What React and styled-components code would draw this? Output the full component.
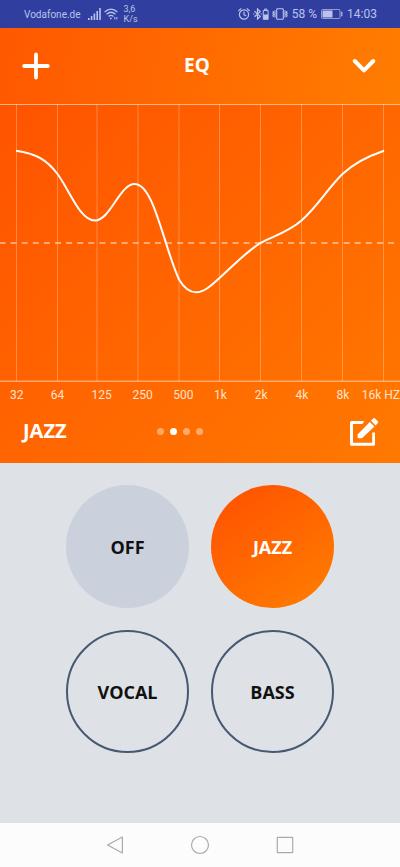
import React, { useState } from "react";
import styled, { createGlobalStyle, css } from "styled-components";

const GlobalStyle = createGlobalStyle`
  * { box-sizing: border-box; }
  html, body, #root { height: 100%; }
  body { margin: 0; font-family: "Open Sans", "Noto Sans", sans-serif; }
  button { font: inherit; }
`;

const Screen = styled.div`
  display: flex;
  flex-direction: column;
  min-height: 100%;
  overflow: hidden;
  background: #dee1e6;
`;

const StatusBar = styled.div`
  display: flex;
  align-items: center;
  justify-content: space-between;
  height: 28px;
  padding: 0 23px 0 24px;
  background: #303f9f;
  color: #bcc2ea;
  font-family: Roboto, sans-serif;
`;

const StatusGroup = styled.div`
  display: flex;
  align-items: center;
  gap: ${(p) => p.$gap}px;
  svg { display: block; }
`;

const Carrier = styled.span`
  font-size: 10px;
  margin-right: 4px;
`;

const Speed = styled.span`
  font-size: 9px;
  line-height: 10px;
  margin-left: 3px;
`;

const StatusText = styled.span`
  font-size: 12px;
  line-height: 16px;
  white-space: nowrap;
`;

const Header = styled.header`
  display: grid;
  grid-template-columns: 1fr auto 1fr;
  align-items: center;
  height: 76px;
  padding: 0 20px;
  background: linear-gradient(100deg, #ff5800, #ff7d00);
  color: #fff;
`;

const Title = styled.h1`
  margin: 0;
  padding: 0 6px 2px 0;
  font-size: 19px;
  line-height: 26px;
  font-weight: 700;
`;

const IconButton = styled.button`
  display: grid;
  place-items: center;
  width: 32px;
  height: 32px;
  padding: 0;
  border: 0;
  background: none;
  color: inherit;
  cursor: pointer;
  justify-self: ${(p) => p.$side || "center"};
`;

const EqPanel = styled.section`
  background: linear-gradient(135deg, #ff5300, #ff7900);
  color: #fff;
`;

const Chart = styled.svg`
  display: block;
  width: 100%;
  height: auto;
`;

const AxisLabels = styled.div`
  display: grid;
  grid-template-columns: repeat(10, minmax(0, 1fr));
  margin: 0 -4px;
  font-family: Roboto, sans-serif;
  font-size: 12px;
  line-height: 26px;
  color: #ffe3d0;
`;

const AxisLabel = styled.span`
  display: flex;
  padding-left: 14px;
  white-space: nowrap;
  &:last-child {
    justify-content: flex-end;
    padding: 0 4px 0 0;
  }
`;

const PresetBar = styled.div`
  display: grid;
  grid-template-columns: 1fr auto 1fr;
  align-items: center;
  height: 55px;
  padding: 0 20px 9px 23px;
`;

const PresetName = styled.h2`
  margin: 0;
  font-size: 20px;
  line-height: 26px;
  font-weight: 700;
`;

const Dots = styled.div`
  display: flex;
  gap: 6px;
  padding-right: 43px;
`;

const Dot = styled.span`
  width: 7px;
  height: 7px;
  border-radius: 50%;
  background: ${(p) => (p.$active ? "#fff" : "rgba(255, 255, 255, 0.42)")};
`;

const PresetGrid = styled.main`
  flex: 1;
  display: grid;
  grid-template-columns: repeat(2, 123px);
  align-content: start;
  justify-content: center;
  gap: 22px;
  padding: 22px 0;
`;

const looks = {
  off: css`
    background: #cad1dc;
    color: #111;
  `,
  selected: css`
    background: linear-gradient(145deg, #ff5400 10%, #ff7a00 90%);
    color: #fff;
  `,
  outline: css`
    background: none;
    border: 2px solid #475872;
    color: #111;
  `,
};

const PresetButton = styled.button`
  aspect-ratio: 1;
  padding: 0;
  border: 0;
  border-radius: 50%;
  font-size: 18px;
  line-height: 24px;
  font-weight: 700;
  cursor: pointer;
  ${(p) => looks[p.$look]}
`;

const NavBar = styled.nav`
  display: flex;
  align-items: center;
  justify-content: center;
  gap: 53px;
  height: 44px;
  background: #fcfcfc;
  color: #aaa;
`;

const FREQUENCIES = ["32", "64", "125", "250", "500", "1k", "2k", "4k", "8k", "16k HZ"];
const GRID_LINES = [16.5, 57.5, 97, 138, 179, 219.5, 260.5, 301.5, 342.5, 383.5];
const PRESETS = ["OFF", "JAZZ", "VOCAL", "BASS"];

const SignalIcon = () => (
  <svg width="13" height="12" viewBox="0 0 13 12" fill="currentColor" aria-hidden="true">
    <path d="M0 10h1.6v2H0zM2.8 8h1.6v4H2.8zM5.6 5.5h1.6V12H5.6zM8.4 3H10v9H8.4zM11.2 0h1.6v12h-1.6z" />
  </svg>
);

const WifiIcon = () => (
  <svg width="14" height="12" viewBox="0 0 14 12" fill="none" stroke="currentColor" strokeWidth="1.3" aria-hidden="true">
    <path d="M.6 4Q7-1.8 13.4 4M2.6 6.3Q7 2.3 11.4 6.3M4.6 8.5Q7 6.3 9.4 8.5" />
    <circle cx="6.8" cy="10.4" r=".9" fill="currentColor" stroke="none" />
    <path d="M10.8 9v2.4M12.8 9v2.4" strokeWidth="1" />
  </svg>
);

const AlarmIcon = () => (
  <svg width="12" height="12" viewBox="0 0 12 12" fill="none" stroke="currentColor" strokeWidth="1.2" strokeLinecap="round" aria-hidden="true">
    <circle cx="6" cy="6.5" r="4.6" />
    <path d="M6 4v2.7l1.8 1M.7 2.6 2.9.8M11.3 2.6 9.1.8" />
  </svg>
);

const BluetoothIcon = () => (
  <svg width="16" height="12" viewBox="0 0 16 12" fill="none" stroke="currentColor" aria-hidden="true">
    <path d="M1.5 3.2 7.2 8.4 4.5 11V1l2.7 2.6-5.7 5.2" strokeWidth="1.2" />
    <path d="M0 6h1.3M7.5 6h1.3" strokeWidth="1.2" />
    <path d="M10.3 2.5h4.8v8.8h-4.8zM11.6 1h2.2v1.5h-2.2z" />
    <path d="M10.3 6.5h4.8v4.8h-4.8z" fill="currentColor" stroke="none" />
  </svg>
);

const VibrateIcon = () => (
  <svg width="16" height="12" viewBox="0 0 16 12" fill="none" stroke="currentColor" strokeWidth="1.1" aria-hidden="true">
    <rect x="4.7" y=".7" width="6.6" height="10.6" rx=".8" />
    <path d="M3 2.5v7M13 2.5v7M.8 3l.9 1.2-.9 1.2.9 1.2-.9 1.2.9 1.2M15.2 3l-.9 1.2.9 1.2-.9 1.2.9 1.2-.9 1.2" />
  </svg>
);

const BatteryIcon = () => (
  <svg width="22" height="10" viewBox="0 0 22 10" fill="none" stroke="currentColor" aria-hidden="true">
    <rect x=".5" y=".5" width="18.5" height="9" rx="1" strokeOpacity=".7" />
    <path d="M1.5 1.5h10v7h-10z" fill="currentColor" stroke="none" />
    <path d="M20.8 2.8v4.4" strokeWidth="1.2" />
  </svg>
);

const PlusIcon = () => (
  <svg width="28" height="28" viewBox="0 0 28 28" stroke="currentColor" strokeWidth="3.8" strokeLinecap="round" aria-hidden="true">
    <path d="M14 2.5v23M2.2 14h23.6" />
  </svg>
);

const ChevronIcon = () => (
  <svg width="24" height="16" viewBox="0 0 24 16" fill="none" stroke="currentColor" strokeWidth="4" strokeLinecap="round" strokeLinejoin="round" aria-hidden="true">
    <path d="M2.8 3 12 12.3 21.2 3" />
  </svg>
);

const EditIcon = () => (
  <svg width="30" height="30" viewBox="0 0 30 30" fill="currentColor" aria-hidden="true">
    <path d="M15.2 5H2.6A1.6 1.6 0 0 0 1 6.6v21.6a1.6 1.6 0 0 0 1.6 1.6h21.8a1.6 1.6 0 0 0 1.6-1.6V16.4h-2.8V26.8H4V8h9.4z" />
    <path d="M8.6 18.4 20.8 6l4.6 4.6L13 22.2H9.4q-.8 0-.8-.8z" />
    <path d="m22 4.8 2.2-2.4q.9-.9 1.8 0l2.8 2.8q.9.9 0 1.8l-2.2 2.4z" />
  </svg>
);

function EqCurve() {
  return (
    <Chart viewBox="0 0 400 278" role="img" aria-label="Equalizer curve">
      <g stroke="#fff" strokeOpacity=".28">
        {GRID_LINES.map((x) => (
          <path key={x} d={`M${x} 0v277`} />
        ))}
      </g>
      <path d="M0 .5h400" stroke="#fff" strokeOpacity=".55" />
      <path d="M0 277.2h400" stroke="#fff" strokeOpacity=".42" strokeWidth="1.6" />
      <path d="M-.5 139h396" stroke="#fff" strokeOpacity=".62" strokeWidth="1.3" strokeDasharray="6 5.1" />
      <path
        d="M16 46.7C36 49.5 47 56 57.5 70C70 87 80 116.5 95 116.5C110 116.5 120 80 134.5 80C154 80 163 140 179 175.5C184 184 190 188.3 196 188.3C204 188.3 212 181 220 173.5C234 161 247 147 260.5 139C274 132 290 127 301.5 116.5C317 103 328 84 342.5 70C354 59 367 52.5 384 46.7"
        fill="none"
        stroke="#fff"
        strokeWidth="2"
      />
    </Chart>
  );
}

export default function App() {
  const [selected, setSelected] = useState("JAZZ");
  const look = (name) => (name === selected ? "selected" : name === "OFF" ? "off" : "outline");

  return (
    <>
      <GlobalStyle />
      <Screen>
        <StatusBar>
          <StatusGroup $gap={3}>
            <Carrier>Vodafone.de</Carrier>
            <SignalIcon />
            <WifiIcon />
            <Speed>3,6<br />K/s</Speed>
          </StatusGroup>
          <StatusGroup $gap={4}>
            <StatusGroup $gap={3}>
              <AlarmIcon />
              <BluetoothIcon />
              <VibrateIcon />
            </StatusGroup>
            <StatusText>58 %</StatusText>
            <BatteryIcon />
            <StatusText>14:03</StatusText>
          </StatusGroup>
        </StatusBar>
        <Header>
          <IconButton $side="start" aria-label="Add preset"><PlusIcon /></IconButton>
          <Title>EQ</Title>
          <IconButton $side="end" aria-label="Close equalizer"><ChevronIcon /></IconButton>
        </Header>
        <EqPanel>
          <EqCurve />
          <AxisLabels>
            {FREQUENCIES.map((f) => <AxisLabel key={f}>{f}</AxisLabel>)}
          </AxisLabels>
          <PresetBar>
            <PresetName>{selected}</PresetName>
            <Dots>
              {PRESETS.map((name) => <Dot key={name} $active={name === selected} />)}
            </Dots>
            <IconButton $side="end" aria-label="Edit preset"><EditIcon /></IconButton>
          </PresetBar>
        </EqPanel>
        <PresetGrid>
          {PRESETS.map((name) => (
            <PresetButton key={name} $look={look(name)} aria-pressed={name === selected} onClick={() => setSelected(name)}>
              {name}
            </PresetButton>
          ))}
        </PresetGrid>
        <NavBar>
          <IconButton aria-label="Back">
            <svg width="18" height="20" viewBox="0 0 18 20" fill="none" stroke="currentColor" strokeWidth="1.2" strokeLinejoin="round" aria-hidden="true">
              <path d="M16.4 2v16L1.6 10z" />
            </svg>
          </IconButton>
          <IconButton aria-label="Home">
            <svg width="20" height="20" viewBox="0 0 20 20" fill="none" stroke="currentColor" strokeWidth="1.2" aria-hidden="true">
              <circle cx="10" cy="10" r="8.5" />
            </svg>
          </IconButton>
          <IconButton aria-label="Recent apps">
            <svg width="18" height="18" viewBox="0 0 18 18" fill="none" stroke="currentColor" strokeWidth="1.2" aria-hidden="true">
              <rect x="1.3" y="1.3" width="15.4" height="15.4" rx=".6" />
            </svg>
          </IconButton>
        </NavBar>
      </Screen>
    </>
  );
}
